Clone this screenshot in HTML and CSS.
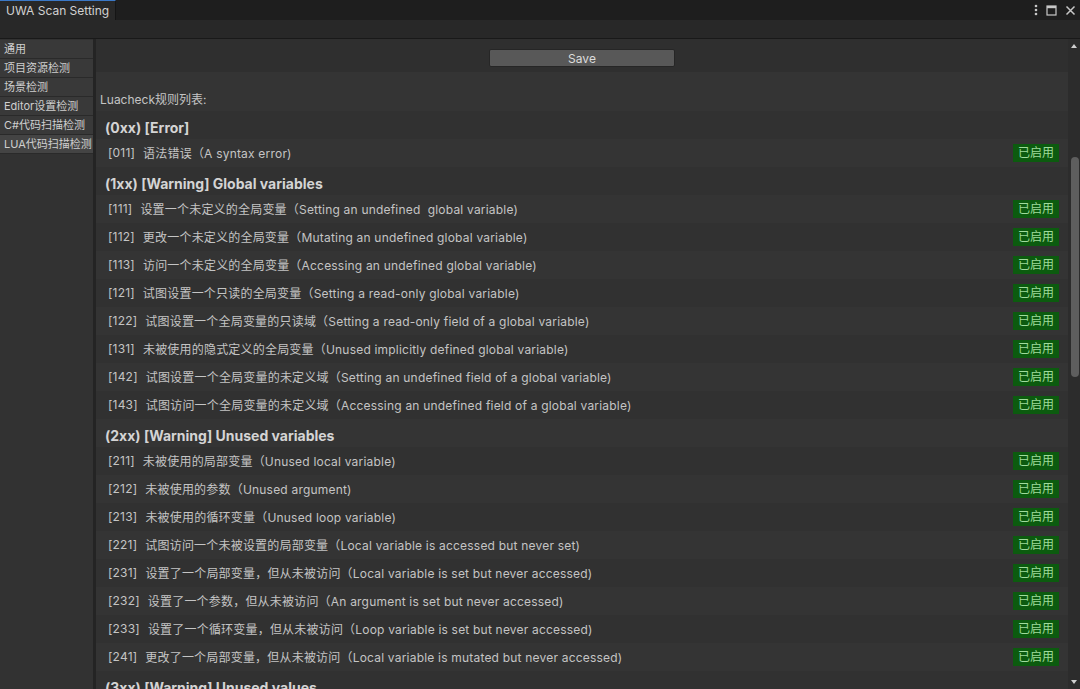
FILE: index.html
```html
<!DOCTYPE html>
<html lang="zh-CN">
<head>
    <meta charset="UTF-8">
    <title>UWA Scan Setting</title>
    <link rel="stylesheet" href="styles.css">
</head>
<body>
    <div class="titlebar">
        <div class="tab">UWA Scan Setting</div>
        <div class="win-icons">
            <svg width="4" height="12" viewBox="0 0 4 12"><circle cx="2" cy="2" r="1.3" fill="#c8c8c8"/><circle cx="2" cy="6" r="1.3" fill="#c8c8c8"/><circle cx="2" cy="10" r="1.3" fill="#c8c8c8"/></svg>
            <svg width="11" height="11" viewBox="0 0 11 11"><rect x="1" y="1" width="9" height="9" fill="none" stroke="#c8c8c8" stroke-width="1.2"/><rect x="1" y="1" width="9" height="2.2" fill="#c8c8c8"/></svg>
            <svg width="11" height="11" viewBox="0 0 11 11"><path d="M1.5 1.5 L9.5 9.5 M9.5 1.5 L1.5 9.5" stroke="#c8c8c8" stroke-width="1.5"/></svg>
        </div>
    </div>
    <div class="toolbar"></div>
    <div class="main">
        <div class="sidebar">
            <div class="side-item">通用</div>
            <div class="side-item">项目资源检测</div>
            <div class="side-item">场景检测</div>
            <div class="side-item">Editor设置检测</div>
            <div class="side-item">C#代码扫描检测</div>
            <div class="side-item active">LUA代码扫描检测</div>
        </div>
        <div class="content">
            <div class="save-bar"><button class="save-btn">Save</button></div>
            <div class="list-label">Luacheck规则列表:</div>

            <div class="group">(0xx) [Error]</div>
            <div class="rule"><span class="code">[011]</span>语法错误（A syntax error)<span class="badge">已启用</span></div>

            <div class="group">(1xx) [Warning] Global variables</div>
            <div class="rule"><span class="code">[111]</span>设置一个未定义的全局变量（Setting an undefined&nbsp; global variable)<span class="badge">已启用</span></div>
            <div class="rule"><span class="code">[112]</span>更改一个未定义的全局变量（Mutating an undefined global variable)<span class="badge">已启用</span></div>
            <div class="rule"><span class="code">[113]</span>访问一个未定义的全局变量（Accessing an undefined global variable)<span class="badge">已启用</span></div>
            <div class="rule"><span class="code">[121]</span>试图设置一个只读的全局变量（Setting a read-only global variable)<span class="badge">已启用</span></div>
            <div class="rule"><span class="code">[122]</span>试图设置一个全局变量的只读域（Setting a read-only field of a global variable)<span class="badge">已启用</span></div>
            <div class="rule"><span class="code">[131]</span>未被使用的隐式定义的全局变量（Unused implicitly defined global variable)<span class="badge">已启用</span></div>
            <div class="rule"><span class="code">[142]</span>试图设置一个全局变量的未定义域（Setting an undefined field of a global variable)<span class="badge">已启用</span></div>
            <div class="rule"><span class="code">[143]</span>试图访问一个全局变量的未定义域（Accessing an undefined field of a global variable)<span class="badge">已启用</span></div>

            <div class="group">(2xx) [Warning] Unused variables</div>
            <div class="rule"><span class="code">[211]</span>未被使用的局部变量（Unused local variable)<span class="badge">已启用</span></div>
            <div class="rule"><span class="code">[212]</span>未被使用的参数（Unused argument)<span class="badge">已启用</span></div>
            <div class="rule"><span class="code">[213]</span>未被使用的循环变量（Unused loop variable)<span class="badge">已启用</span></div>
            <div class="rule"><span class="code">[221]</span>试图访问一个未被设置的局部变量（Local variable is accessed but never set)<span class="badge">已启用</span></div>
            <div class="rule"><span class="code">[231]</span>设置了一个局部变量，但从未被访问（Local variable is set but never accessed)<span class="badge">已启用</span></div>
            <div class="rule"><span class="code">[232]</span>设置了一个参数，但从未被访问（An argument is set but never accessed)<span class="badge">已启用</span></div>
            <div class="rule"><span class="code">[233]</span>设置了一个循环变量，但从未被访问（Loop variable is set but never accessed)<span class="badge">已启用</span></div>
            <div class="rule"><span class="code">[241]</span>更改了一个局部变量，但从未被访问（Local variable is mutated but never accessed)<span class="badge">已启用</span></div>

            <div class="group">(3xx) [Warning] Unused values</div>
        </div>
        <div class="scrollbar">
            <div class="arrow up"></div>
            <div class="track"><div class="thumb"></div></div>
            <div class="arrow down"></div>
        </div>
    </div>
</body>
</html>
```

FILE: styles.css
```css
body {
    margin: 0;
    width: 1080px;
    height: 689px;
    overflow: hidden;
    background-color: #1f1f1f;
    font-family: "Inter", "Noto Sans CJK SC", sans-serif;
    font-size: 12px;
    color: #c4c4c4;
}
.titlebar {
    height: 20px;
    display: flex;
    justify-content: space-between;
    background-color: #1e1e1e;
}
.tab {
    width: 109px;
    padding-left: 6px;
    line-height: 19px;
    background-color: #282828;
    border-top: 1px solid #3b78c6;
    border-right: 1px solid #151515;
    color: #d2d2d2;
}
.win-icons {
    display: flex;
    align-items: center;
    gap: 8px;
    padding-right: 4px;
}
.toolbar {
    height: 18px;
    background-color: #282828;
    border-bottom: 1px solid #191919;
}
.main {
    display: flex;
    height: 650px;
}
.sidebar {
    width: 93px;
    flex-shrink: 0;
    background-color: #323232;
    border-right: 3px solid #242424;
    padding-top: 1px;
}
.side-item {
    height: 18px;
    line-height: 18px;
    padding-left: 4px;
    background-color: #393939;
    border-bottom: 1px solid #2a2a2a;
    white-space: nowrap;
    overflow: hidden;
    font-size: 11px;
    color: #cfcfcf;
}
.side-item.active {
    background-color: #444444;
}
.content {
    flex: 1;
    background-color: #313131;
    overflow: hidden;
}
.save-bar {
    height: 33px;
    padding-top: 10px;
    box-sizing: border-box;
    text-align: center;
    background-color: #2f2f2f;
}
.save-btn {
    width: 186px;
    height: 18px;
    padding: 0;
    background-color: #585858;
    border: 1px solid #262626;
    border-radius: 2px;
    color: #dcdcdc;
    font-family: inherit;
    font-size: 12px;
}
.list-label {
    height: 39px;
    box-sizing: border-box;
    padding: 19px 0 0 4px;
    line-height: 18px;
    background-color: #333333;
}
.group {
    height: 28px;
    box-sizing: border-box;
    padding: 6px 0 0 9px;
    line-height: 22px;
    font-size: 14px;
    font-weight: bold;
    color: #d4d4d4;
}
.rule {
    height: 28px;
    box-sizing: border-box;
    display: flex;
    align-items: center;
    padding: 0 9px 2px 12px;
    white-space: nowrap;
    letter-spacing: 0.2px;
}
.content > div:nth-child(even) {
    background-color: #343434;
}
.code {
    margin-right: 8px;
}
.badge {
    margin-left: auto;
    margin-top: 2px;
    width: 46px;
    height: 18px;
    line-height: 18px;
    text-align: center;
    letter-spacing: 0;
    background-color: #0c5b0f;
    color: #9fdb9c;
}
.scrollbar {
    width: 12px;
    flex-shrink: 0;
    display: flex;
    flex-direction: column;
    background-color: #2c2c2c;
}
.arrow {
    height: 14px;
    display: flex;
    justify-content: center;
    align-items: center;
}
.arrow.up::after {
    content: "";
    border-left: 3px solid transparent;
    border-right: 3px solid transparent;
    border-bottom: 4px solid #d0d0d0;
}
.arrow.down::after {
    content: "";
    border-left: 3px solid transparent;
    border-right: 3px solid transparent;
    border-top: 4px solid #d0d0d0;
}
.track {
    flex: 1;
    padding-top: 104px;
}
.thumb {
    width: 8px;
    height: 220px;
    margin-left: 3px;
    background-color: #5e5e5e;
    border-radius: 4px;
}
```
